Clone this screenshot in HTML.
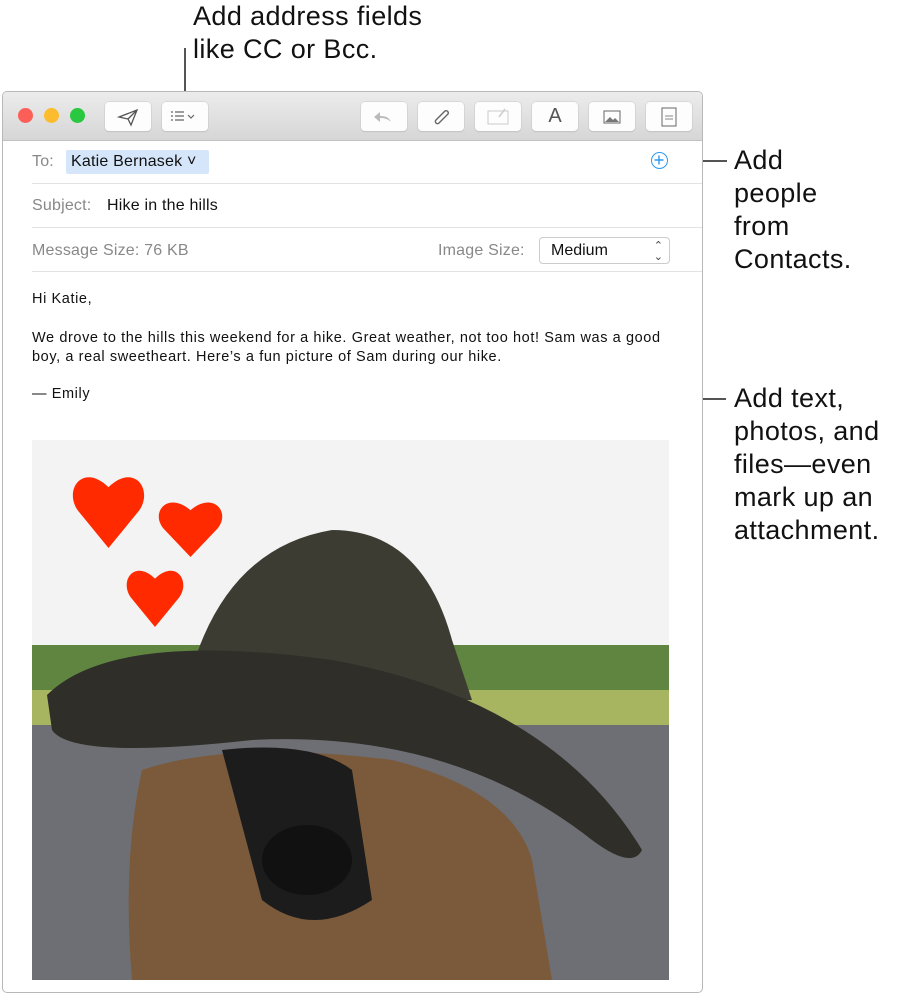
<!DOCTYPE html>
<html><head><meta charset="utf-8"><style>
body{margin:0;width:899px;height:974px;background:#fff;position:relative;overflow:hidden;font-family:"Liberation Sans",sans-serif}
.a{position:absolute}
.call{font-size:27px;color:#111;line-height:33px;letter-spacing:0.4px}
.win{left:2px;top:91px;width:699px;height:900px;border:1px solid #b8b8b8;border-radius:5px;background:#fff;overflow:hidden}
.tb{left:0;top:0;width:699px;height:48px;background:linear-gradient(#ececec,#d6d6d6);border-bottom:1px solid #c2c2c2}
.btn{position:absolute;top:10px;width:46px;height:29px;background:#fdfdfd;border-radius:4px;box-shadow:0 0 0 0.5px #c8c8c8,0 1px 1px #bbb}
.dot{position:absolute;top:16px;width:15px;height:15px;border-radius:50%}
.lbl{color:#888;font-size:16px;letter-spacing:0.2px}
.line{height:1px;background:#e2e2e2}
.body{font-size:14.5px;color:#111;letter-spacing:0.6px}
</style></head><body>
<div class="a call" style="left:193px;top:0px">Add address fields<br>like CC or Bcc.</div>
<div class="a" style="left:184px;top:48px;width:2px;height:53px;background:#555"></div>
<div class="a call" style="left:734px;top:144px">Add<br>people<br>from<br>Contacts.</div>
<div class="a" style="left:673px;top:160px;width:54px;height:2px;background:#555"></div>
<div class="a call" style="left:734px;top:382px">Add text,<br>photos, and<br>files—even<br>mark up an<br>attachment.</div>
<div class="a" style="left:656px;top:398px;width:70px;height:2px;background:#555"></div>

<div class="a win">
 <div class="a tb">
  <div class="dot" style="left:15px;background:#fc5f57"></div>
  <div class="dot" style="left:41px;background:#fdbc2e"></div>
  <div class="dot" style="left:67px;background:#29c840"></div>
  <div class="btn" style="left:102px"><svg width="46" height="29"><path d="M14 15l18-7-6 15-3-6z M23 17l9-9" fill="none" stroke="#555" stroke-width="1.3"/></svg></div>
  <div class="btn" style="left:159px"><svg width="46" height="29"><g stroke="#666" stroke-width="1.2"><path d="M9 10h2M9 14h2M9 18h2M13 10h9M13 14h9M13 18h9"/><path d="M26 13l3 3 3-3" fill="none"/></g></svg></div>
  <div class="btn" style="left:358px"><svg width="46" height="29"><path d="M30 20c-2-5-6-6-11-6v-4l-6 5 6 5v-4c4 0 8 1 11 4z" fill="#bbb"/></svg></div>
  <div class="btn" style="left:415px"><svg width="46" height="29"><path d="M27 9l-9 9c-2 2 1 5 3 3l9-9c1-2-1-4-3-3l-9 9" fill="none" stroke="#666" stroke-width="1.4"/></svg></div>
  <div class="btn" style="left:472px"><svg width="46" height="29"><rect x="13" y="9" width="20" height="13" fill="none" stroke="#ccc"/><path d="M30 7l-6 8" stroke="#ccc" stroke-width="1.5"/></svg></div>
  <div class="btn" style="left:529px;font-size:20px;color:#555;text-align:center;line-height:29px">A</div>
  <div class="btn" style="left:586px"><svg width="46" height="29"><rect x="15" y="9" width="16" height="12" fill="none" stroke="#666"/><path d="M16 20l5-5 3 3 2-2 4 4z" fill="#777"/></svg></div>
  <div class="btn" style="left:643px"><svg width="46" height="29"><rect x="16" y="6" width="14" height="18" fill="none" stroke="#666"/><path d="M19 14h8M19 17h8" stroke="#888"/></svg></div>
 </div>
 <div class="a lbl" style="left:29px;top:61px">To:</div>
 <div class="a" style="left:63px;top:58px;width:143px;height:24px;background:#d6e6fa;border-radius:2px;font-size:16px;color:#111;line-height:24px;padding-left:5px;box-sizing:border-box;letter-spacing:0.2px">Katie Bernasek ˅</div>
 <div class="a" style="left:648px;top:60px;width:17px;height:17px;border:1.5px solid #2a9bf2;border-radius:50%;box-sizing:border-box"><svg width="14" height="14" style="position:absolute;left:0;top:0"><path d="M7 2.5v9M2.5 7h9" stroke="#2a9bf2" stroke-width="1.4"/></svg></div>
 <div class="a line" style="left:29px;top:91px;width:670px"></div>
 <div class="a lbl" style="left:29px;top:105px">Subject:</div>
 <div class="a" style="left:104px;top:105px;font-size:16px;color:#111;letter-spacing:0.2px">Hike in the hills</div>
 <div class="a line" style="left:29px;top:135px;width:670px"></div>
 <div class="a lbl" style="left:29px;top:150px">Message Size: 76 KB</div>
 <div class="a lbl" style="left:435px;top:150px">Image Size:</div>
 <div class="a" style="left:536px;top:145px;width:131px;height:27px;border:1px solid #ccc;border-radius:4px;box-sizing:border-box;font-size:16px;color:#111;line-height:25px;padding-left:11px">Medium<span style="position:absolute;right:6px;font-size:11px;line-height:11px;color:#444;top:3px">⌃<br>⌄</span></div>
 <div class="a line" style="left:29px;top:179px;width:670px"></div>
 <div class="a body" style="left:29px;top:199px">Hi Katie,</div>
 <div class="a body" style="left:29px;top:237px;line-height:19px;width:660px;white-space:nowrap">We drove to the hills this weekend for a hike. Great weather, not too hot! Sam was a good<br>boy, a real sweetheart. Here’s a fun picture of Sam during our hike.</div>
 <div class="a body" style="left:29px;top:294px">— Emily</div>
 <svg class="a" style="left:29px;top:348px" width="637" height="540">
  <rect width="637" height="540" fill="#f2f3f2"/>
  <rect y="205" width="637" height="80" fill="#5f8540"/>
  <rect y="250" width="637" height="40" fill="#a8b560"/>
  <rect y="285" width="637" height="255" fill="#6d6f74"/>
  <path d="M150 270 Q180 110 300 90 Q390 90 420 200 L440 260 Z" fill="#3d3c33"/>
  <path d="M15 255 Q80 190 300 220 Q520 260 610 410 Q600 430 560 400 Q420 290 220 300 Q40 320 20 290 Z" fill="#2f2e28"/>
  <path d="M110 330 Q200 300 360 320 Q480 350 500 420 L520 540 L100 540 Q90 420 110 330Z" fill="#7a5a3a"/>
  <path d="M190 310 Q280 300 320 330 L340 460 Q280 500 230 460 Z" fill="#1c1c1c"/>
  <ellipse cx="275" cy="420" rx="45" ry="35" fill="#111"/>
  <g fill="#ff2a00">
   <path transform="translate(40,30) scale(0.73,0.78)" d="M50 100 L8 52 C-12 25 15 -10 50 22 C85 -10 112 25 92 52 Z"/>
   <path transform="translate(126,57) scale(0.65,0.6)" d="M50 100 L8 52 C-12 25 15 -10 50 22 C85 -10 112 25 92 52 Z"/>
   <path transform="translate(94,125) scale(0.58,0.62)" d="M50 100 L8 52 C-12 25 15 -10 50 22 C85 -10 112 25 92 52 Z"/>
  </g>
 </svg>
</div>
</body></html>
